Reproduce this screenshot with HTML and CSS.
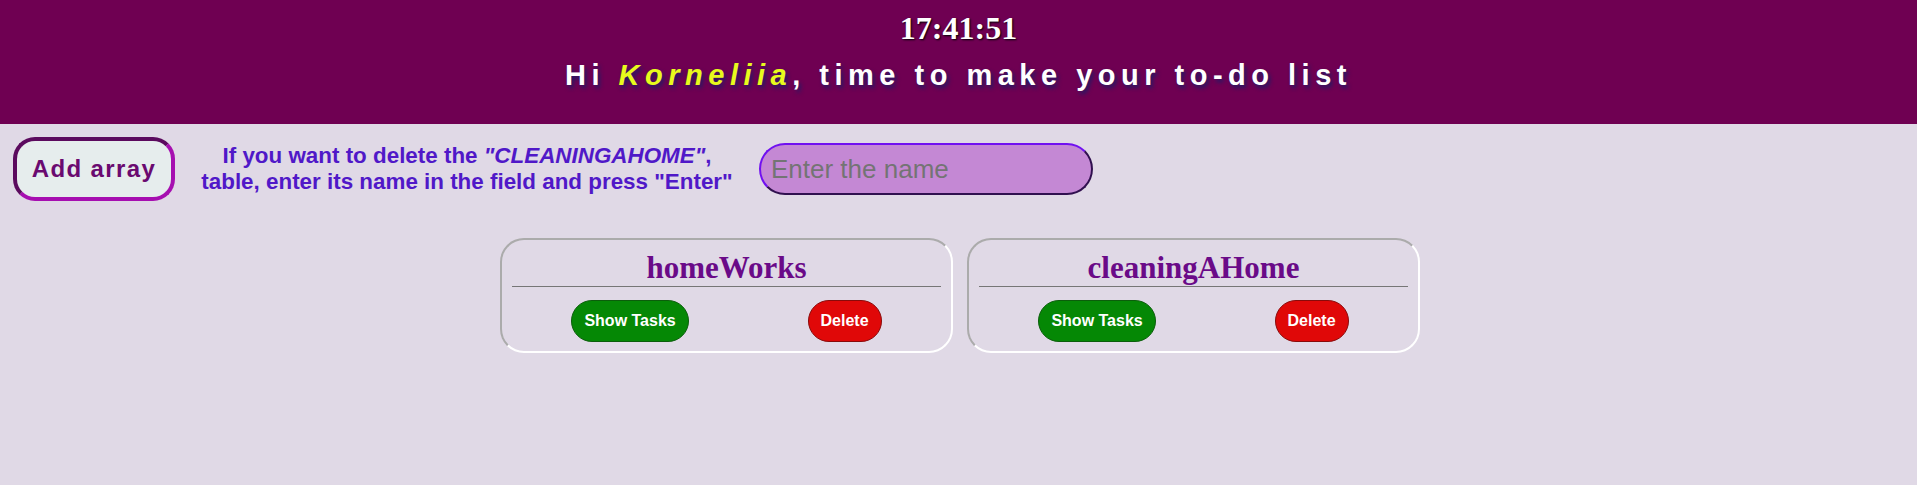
FILE: index.html
```html
<!DOCTYPE html>
<html lang="en">
<head>
<meta charset="utf-8">
<title>To-do list</title>
<link rel="stylesheet" href="styles.css">
</head>
<body>
<header class="header">
  <h1 class="clock">17:41:51</h1>
  <h2 class="greeting">Hi <i class="name">Korneliia</i>, time to make your to-do list</h2>
</header>
<section class="toolbar">
  <button class="add-btn">Add array</button>
  <p class="hint">If you want to delete the <i>"CLEANINGAHOME"</i>,<br>table, enter its name in the field and press "Enter"</p>
  <input class="name-input" type="text" placeholder="Enter the name">
</section>
<main class="cards">
  <div class="card">
    <h3 class="card-title">homeWorks</h3>
    <div class="card-actions">
      <button class="btn btn-show">Show Tasks</button>
      <button class="btn btn-delete">Delete</button>
    </div>
  </div>
  <div class="card">
    <h3 class="card-title">cleaningAHome</h3>
    <div class="card-actions">
      <button class="btn btn-show">Show Tasks</button>
      <button class="btn btn-delete">Delete</button>
    </div>
  </div>
</main>
</body>
</html>
```
FILE: styles.css
```css
html, body {
  margin: 0;
  padding: 0;
}
body {
  background: #e0d9e6;
  font-family: "Liberation Sans", Arial, sans-serif;
  height: 485px;
  overflow: hidden;
}
.header {
  background: #6f0052;
  height: 124px;
  box-sizing: border-box;
  padding-top: 10px;
  text-align: center;
}
.clock {
  margin: 0;
  font-family: "Liberation Serif", "Times New Roman", serif;
  font-weight: bold;
  font-size: 32px;
  line-height: 37px;
  color: #ffffff;
  text-shadow: 1px 1px 2px #000000;
}
.greeting {
  margin: 11px 0 0;
  font-family: "Liberation Sans", Arial, sans-serif;
  font-weight: bold;
  font-size: 29px;
  line-height: 34px;
  letter-spacing: 5.5px;
  color: #ffffff;
  text-shadow: 2px 3px 4px #1c1c66;
}
.name {
  color: #e8fa1c;
}
.toolbar {
  display: flex;
  align-items: center;
  margin-top: 13px;
  padding-left: 13px;
}
.add-btn {
  width: 162px;
  height: 64px;
  box-sizing: border-box;
  border: 4px solid;
  border-color: #5b0a5e #a60fb0 #a60fb0 #5b0a5e;
  border-radius: 22px;
  background: #e6eded;
  color: #6a0a70;
  font-family: "Liberation Sans", Arial, sans-serif;
  font-weight: bold;
  font-size: 24px;
  letter-spacing: 1.4px;
  padding: 0;
}
.hint {
  margin: 0 12px;
  width: 560px;
  text-align: center;
  font-weight: bold;
  font-size: 22.4px;
  line-height: 26px;
  color: #5018c8;
}
.name-input {
  width: 334px;
  height: 52px;
  box-sizing: border-box;
  border: 2px solid;
  border-color: #7010f0 #30104f #30104f #7010f0;
  border-radius: 26px;
  background: #c488d4;
  padding: 0 10px;
  font-family: "Liberation Sans", Arial, sans-serif;
  font-size: 26px;
  color: #333;
  outline: none;
}
.name-input::placeholder {
  color: #747474;
}
.cards {
  display: flex;
  justify-content: center;
  gap: 14px;
  margin-top: 37px;
  padding-left: 3px;
}
.card {
  width: 453px;
  height: 115px;
  box-sizing: border-box;
  border: 2px solid;
  border-color: #ababab #ffffff #ffffff #ababab;
  border-radius: 24px;
  padding: 10px 10px 0;
}
.card-title {
  margin: 0;
  font-family: "Liberation Serif", "Times New Roman", serif;
  font-weight: bold;
  font-size: 31px;
  line-height: 36px;
  text-align: center;
  color: #6a0a88;
  border-bottom: 1px solid #767676;
}
.card-actions {
  display: flex;
  justify-content: space-around;
  margin-top: 13px;
}
.btn {
  height: 42px;
  box-sizing: border-box;
  padding: 0 12px;
  border-radius: 21px;
  font-family: "Liberation Sans", Arial, sans-serif;
  font-weight: bold;
  font-size: 16px;
  color: #ffffff;
}
.btn-show {
  background: #058805;
  border: 1px solid #0b5e0b;
}
.btn-delete {
  background: #e00808;
  border: 1px solid #8a0a0a;
}
```
